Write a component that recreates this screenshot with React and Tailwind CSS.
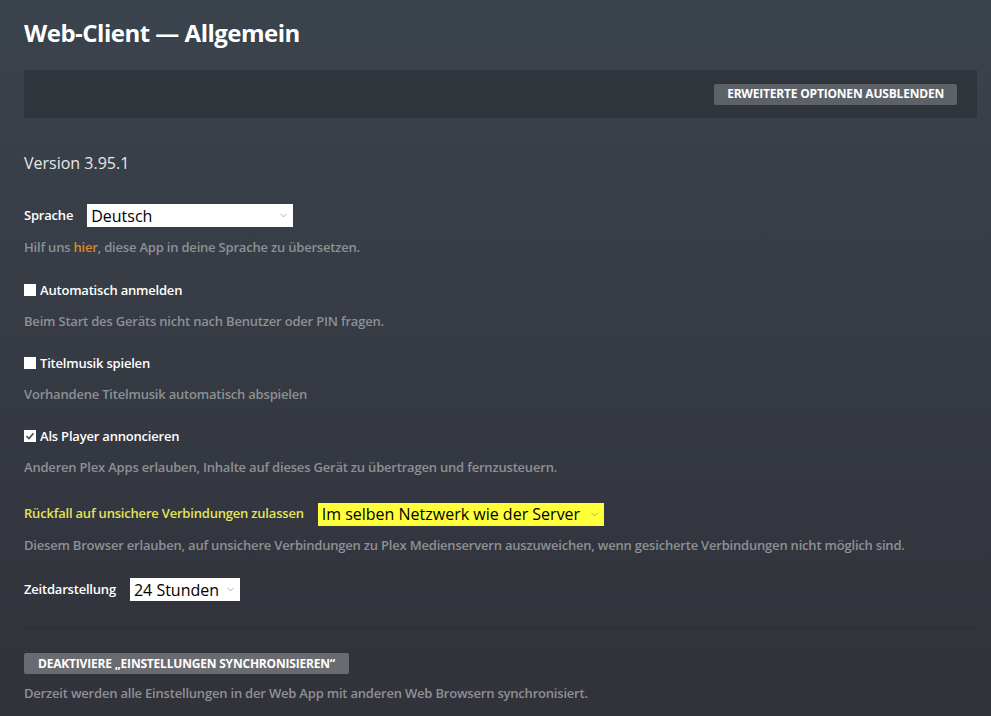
import { ChevronDown } from "lucide-react";

const Select = ({ value, width, yellow }) => (
	<div
		className={`flex h-[23px] items-center justify-between pl-[4px] pr-[4px] text-[16px] leading-none text-black ${
			yellow ? "bg-[#ffff3a]" : "bg-white"
		} ${width}`}>
		<span>{value}</span>
		<ChevronDown
			className={yellow ? "text-[#8a8a3a]" : "text-[#8c8c8c]"}
			size={11}
			strokeWidth={1.5}
		/>
	</div>
);

const Check = ({ checked, label }) => (
	<div className="flex items-center gap-[4px]">
		<div className="flex h-[12px] w-[12px] items-center justify-center bg-white">
			{checked && (
				<svg width="10" height="10" viewBox="0 0 10 10">
					<path
						d="M1.5 5.2 L4 7.5 L8.5 2.2"
						fill="none"
						stroke="#4a4a4a"
						strokeWidth="1.6"
					/>
				</svg>
			)}
		</div>
		<span className="text-[13px] font-semibold tracking-[-0.2px] text-white">
			{label}
		</span>
	</div>
);

const Desc = ({ children }) => (
	<p className="mt-[12px] text-[13px] font-semibold tracking-[-0.2px] text-[#8e9094]">
		{children}
	</p>
);

const App = () => {
	return (
		<main
			className="min-h-[716px] w-full bg-gradient-to-b from-[#3b434d] to-[#31323a] px-[24px] pt-[17px] pb-[10px]"
			style={{ fontFamily: '"Open Sans", sans-serif' }}>
			<h1 className="text-[24px] leading-[32px] font-bold tracking-[-0.5px] text-white">
				Web-Client — Allgemein
			</h1>
			<div className="mt-[21px] flex h-[48px] w-[953px] items-center justify-end bg-[#30353c] pr-[20px]">
				<button className="h-[21px] rounded-[2px] bg-[#5d6168] px-[13px] text-[12px] font-bold tracking-[-0.2px] text-white uppercase">
					Erweiterte Optionen ausblenden
				</button>
			</div>

			<p className="mt-[33px] text-[16px] text-[#e8e8e8]">Version 3.95.1</p>

			<div className="mt-[29px] flex items-center gap-[14px]">
				<span className="text-[13px] font-semibold tracking-[-0.2px] text-white">
					Sprache
				</span>
				<Select value="Deutsch" width="w-[206px]" />
			</div>
			<p className="mt-[11px] text-[13px] font-semibold tracking-[-0.2px] text-[#8e9094]">
				Hilf uns <span className="text-[#dc8a26]">hier</span>, diese App in
				deine Sprache zu übersetzen.
			</p>

			<div className="mt-[23px]">
				<Check label="Automatisch anmelden" />
				<Desc>Beim Start des Geräts nicht nach Benutzer oder PIN fragen.</Desc>
			</div>
			<div className="mt-[22px]">
				<Check label="Titelmusik spielen" />
				<Desc>Vorhandene Titelmusik automatisch abspielen</Desc>
			</div>
			<div className="mt-[22px]">
				<Check checked label="Als Player annoncieren" />
				<Desc>
					Anderen Plex Apps erlauben, Inhalte auf dieses Gerät zu übertragen
					und fernzusteuern.
				</Desc>
			</div>

			<div className="mt-[25px] flex items-center gap-[14px]">
				<span className="text-[13px] font-semibold tracking-[-0.2px] text-[#e4e45a]">
					Rückfall auf unsichere Verbindungen zulassen
				</span>
				<Select value="Im selben Netzwerk wie der Server" width="w-[286px]" yellow />
			</div>
			<p className="mt-[10px] text-[13px] font-semibold tracking-[-0.2px] text-[#8e9094]">
				Diesem Browser erlauben, auf unsichere Verbindungen zu Plex
				Medienservern auszuweichen, wenn gesicherte Verbindungen nicht möglich
				sind.
			</p>

			<div className="mt-[23px] flex items-center gap-[14px]">
				<span className="text-[13px] font-semibold tracking-[-0.2px] text-white">
					Zeitdarstellung
				</span>
				<Select value="24 Stunden" width="w-[110px]" />
			</div>

			<hr className="mt-[26px] w-[953px] border-[#2b2d33]" />

			<button className="mt-[25px] h-[21px] rounded-[2px] bg-[#6a6b70] px-[14px] text-[12px] font-bold tracking-[-0.2px] text-white uppercase">
				Deaktiviere „Einstellungen synchronisieren“
			</button>
			<p className="mt-[10px] text-[13px] font-semibold tracking-[-0.2px] text-[#8e9094]">
				Derzeit werden alle Einstellungen in der Web App mit anderen Web
				Browsern synchronisiert.
			</p>
		</main>
	);
};

export default App;
